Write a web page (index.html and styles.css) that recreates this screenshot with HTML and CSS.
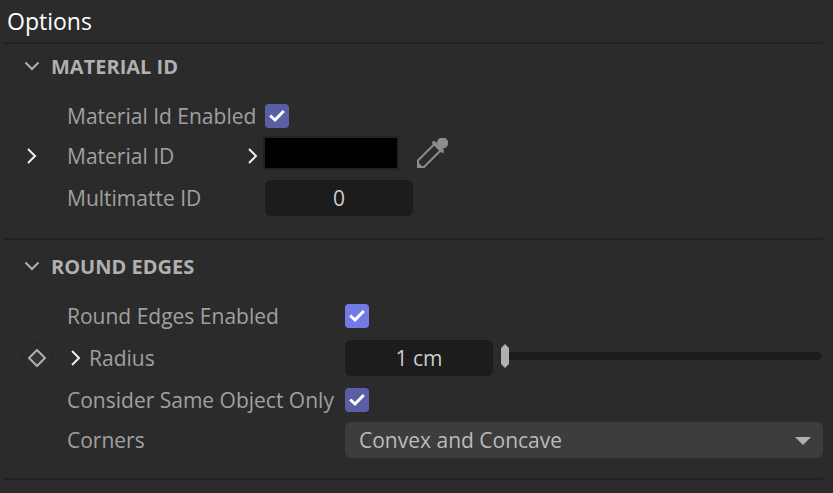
FILE: index.html
```html
<!DOCTYPE html>
<html lang="en">
<head>
    <meta charset="UTF-8">
    <meta name="viewport" content="width=device-width, initial-scale=1.0">
    <title>Options</title>
    <link rel="stylesheet" href="styles.css">
</head>
<body>
    <main class="panel">
        <h1>Options</h1>

        <section class="group material">
            <h2>
                <button class="group-toggle" aria-expanded="true">
                    <svg width="16" height="10" viewBox="0 0 16 10"><path d="M1.5 1.5L8 8L14.5 1.5"/></svg>
                    MATERIAL ID
                </button>
            </h2>
            <div class="row">
                <label class="name" for="material-enabled">Material Id Enabled</label>
                <div class="check">
                    <input type="checkbox" id="material-enabled" checked>
                    <svg width="24" height="24" viewBox="0 0 24 24"><path d="M5.200 11.500L10 16L18.800 7"/></svg>
                </div>
            </div>
            <div class="row">
                <button class="expand" aria-label="Expand material">
                    <svg width="10" height="16" viewBox="0 0 10 16"><path d="M1 1L8 8L1 15"/></svg>
                </button>
                <label class="name" for="material-color">Material ID</label>
                <button class="expand color-expand" aria-label="Expand color">
                    <svg width="10" height="16" viewBox="0 0 10 16"><path d="M1 1L8 8L1 15"/></svg>
                </button>
                <input class="color" type="color" id="material-color" value="#000000">
                <button class="picker" aria-label="Pick color">
                    <svg width="32" height="32" viewBox="0 0 32 32">
                        <path class="tube" d="M18.500 6L2 22.500V29H8L25 12"/>
                        <path class="bulb" d="M1 23L8 30H1ZM16 3.500L18.500 3L21 5A5.600 5.600 0 1 1 26.500 10.500L28 12L27.500 15L25 14.500L16.500 6Z"/>
                    </svg>
                </button>
            </div>
            <div class="row tall">
                <label class="name" for="multimatte">Multimatte ID</label>
                <input class="field" type="text" id="multimatte" value="0">
            </div>
        </section>

        <section class="group edges">
            <h2>
                <button class="group-toggle" aria-expanded="true">
                    <svg width="16" height="10" viewBox="0 0 16 10"><path d="M1.5 1.5L8 8L14.5 1.5"/></svg>
                    ROUND EDGES
                </button>
            </h2>
            <div class="row">
                <label class="name" for="edges-enabled">Round Edges Enabled</label>
                <div class="check">
                    <input class="bright" type="checkbox" id="edges-enabled" checked>
                    <svg width="24" height="24" viewBox="0 0 24 24"><path d="M5.200 11.500L10 16L18.800 7"/></svg>
                </div>
            </div>
            <div class="row tall">
                <button class="keyframe" aria-label="Add keyframe">
                    <svg width="20" height="20" viewBox="0 0 20 20"><path d="M10 2L18 10L10 18L2 10Z"/></svg>
                </button>
                <div class="name nested">
                    <button class="expand" aria-label="Expand radius">
                        <svg width="10" height="16" viewBox="0 0 10 16"><path d="M1 1L8 8L1 15"/></svg>
                    </button>
                    <label for="radius">Radius</label>
                </div>
                <input class="field" type="text" id="radius" value="1 cm">
                <input class="slider" type="range" min="0" max="100" value="0" aria-label="Radius">
            </div>
            <div class="row">
                <label class="name" for="same-object">Consider Same Object Only</label>
                <div class="check">
                    <input type="checkbox" id="same-object" checked>
                    <svg width="24" height="24" viewBox="0 0 24 24"><path d="M5.200 11.500L10 16L18.800 7"/></svg>
                </div>
            </div>
            <div class="row">
                <label class="name" for="corners">Corners</label>
                <div class="dropdown">
                    <select id="corners">
                        <option>Convex and Concave</option>
                        <option>Convex</option>
                        <option>Concave</option>
                    </select>
                    <svg width="16" height="8" viewBox="0 0 16 8"><path d="M0 0H16L8 8Z"/></svg>
                </div>
            </div>
        </section>
    </main>
</body>
</html>
```

FILE: styles.css
```css
* {
    box-sizing: border-box;
}

body {
    margin: 0;
    background: #2b2b2b;
    color: #a0a0a0;
    font-family: "Open Sans", "Noto Sans", sans-serif;
    font-size: 21px;
}

button,
input,
select {
    margin: 0;
    padding: 0;
    border: none;
    background: none;
    color: inherit;
    font: inherit;
}

svg {
    display: block;
    flex: none;
    fill: none;
    stroke: currentColor;
    stroke-width: 2;
}

.panel {
    padding: 0 10px 0 3px;
}

h1 {
    margin: 0;
    padding-left: 4px;
    color: #fff;
    font-size: 23px;
    font-weight: 400;
    line-height: 42px;
}

.group {
    border-top: 2px solid #222;
    padding-bottom: 18px;
}

.edges {
    padding-top: 4px;
    border-bottom: 2px solid #222;
}

h2 {
    margin: 0 0 8px;
    font-size: 20px;
}

.group-toggle {
    display: flex;
    align-items: center;
    gap: 11px;
    height: 44px;
    padding-left: 21px;
    color: #b0b0b0;
    font-weight: 700;
}

.row {
    display: grid;
    grid-template-columns: 64px 198px auto 1fr;
    align-items: center;
    height: 40px;
}

.edges .row {
    grid-template-columns: 64px 278px auto 1fr;
}

.row.tall {
    height: 44px;
}

.name {
    grid-column: 2;
    grid-row: 1;
    white-space: nowrap;
}

.nested {
    display: flex;
    align-items: center;
    gap: 8px;
    padding-left: 4px;
}

.expand {
    justify-self: start;
    color: #eee;
}

.row > .expand {
    margin-left: 24px;
}

.row > .color-expand {
    grid-column: 2;
    grid-row: 1;
    justify-self: end;
    margin-right: 7px;
}

.keyframe {
    display: grid;
    place-items: center;
    width: 32px;
    height: 32px;
    margin-left: 18px;
    border: 1px solid #262626;
    border-radius: 50%;
    color: #b0b0b0;
}

.keyframe svg {
    fill: #333;
    stroke-linejoin: round;
}

.check {
    grid-column: 3;
    display: grid;
    width: 24px;
    height: 24px;
}

.check input,
.check svg {
    grid-area: 1 / 1;
}

.check input {
    appearance: none;
    width: 24px;
    height: 24px;
    border-radius: 4px;
    background: #5a5fa5;
}

.check .bright {
    background: #727be5;
}

.check svg {
    color: #fff;
    stroke-width: 3;
    pointer-events: none;
    visibility: hidden;
}

.check input:checked + svg {
    visibility: visible;
}

.color {
    align-self: start;
    appearance: none;
    width: 136px;
    height: 34px;
    margin-left: -2px;
    border: 2px solid #222;
}

.color::-webkit-color-swatch-wrapper {
    padding: 0;
}

.color::-webkit-color-swatch {
    border: none;
    border-radius: 0;
}

.picker {
    align-self: start;
    justify-self: start;
    margin-top: 2px;
    margin-left: 17px;
    color: #8c8c8c;
}

.picker .bulb {
    fill: currentColor;
    stroke: none;
}

.field {
    grid-column: 3;
    width: 148px;
    height: 36px;
    border-radius: 6px;
    background: #1c1c1c;
    color: #ccc;
    text-align: center;
}

.slider {
    appearance: none;
    min-width: 0;
    height: 24px;
    margin-bottom: 4px;
    margin-left: 8px;
}

.slider::-webkit-slider-runnable-track {
    height: 24px;
    background: linear-gradient(#1c1c1c, #1c1c1c) center / 100% 8px no-repeat;
    clip-path: polygon(0 0, calc(100% - 4px) 0, calc(100% - 4px) 8px, 100% 50%, calc(100% - 4px) 16px, calc(100% - 4px) 100%, 0 100%);
}

.slider::-webkit-slider-thumb {
    appearance: none;
    width: 8px;
    height: 24px;
    background: #b0b0b0;
    clip-path: polygon(50% 0, 100% 4px, 100% 20px, 50% 100%, 0 20px, 0 4px);
}

.dropdown {
    grid-column: 3 / 5;
    display: grid;
    align-items: center;
}

.dropdown select,
.dropdown svg {
    grid-area: 1 / 1;
}

.dropdown select {
    appearance: none;
    width: 100%;
    height: 36px;
    padding: 0 40px 0 14px;
    border-radius: 6px;
    background: #3d3d3d;
    color: #bbb;
}

.dropdown svg {
    justify-self: end;
    margin-top: 2px;
    margin-right: 12px;
    fill: #b0b0b0;
    stroke: none;
    pointer-events: none;
}
```
